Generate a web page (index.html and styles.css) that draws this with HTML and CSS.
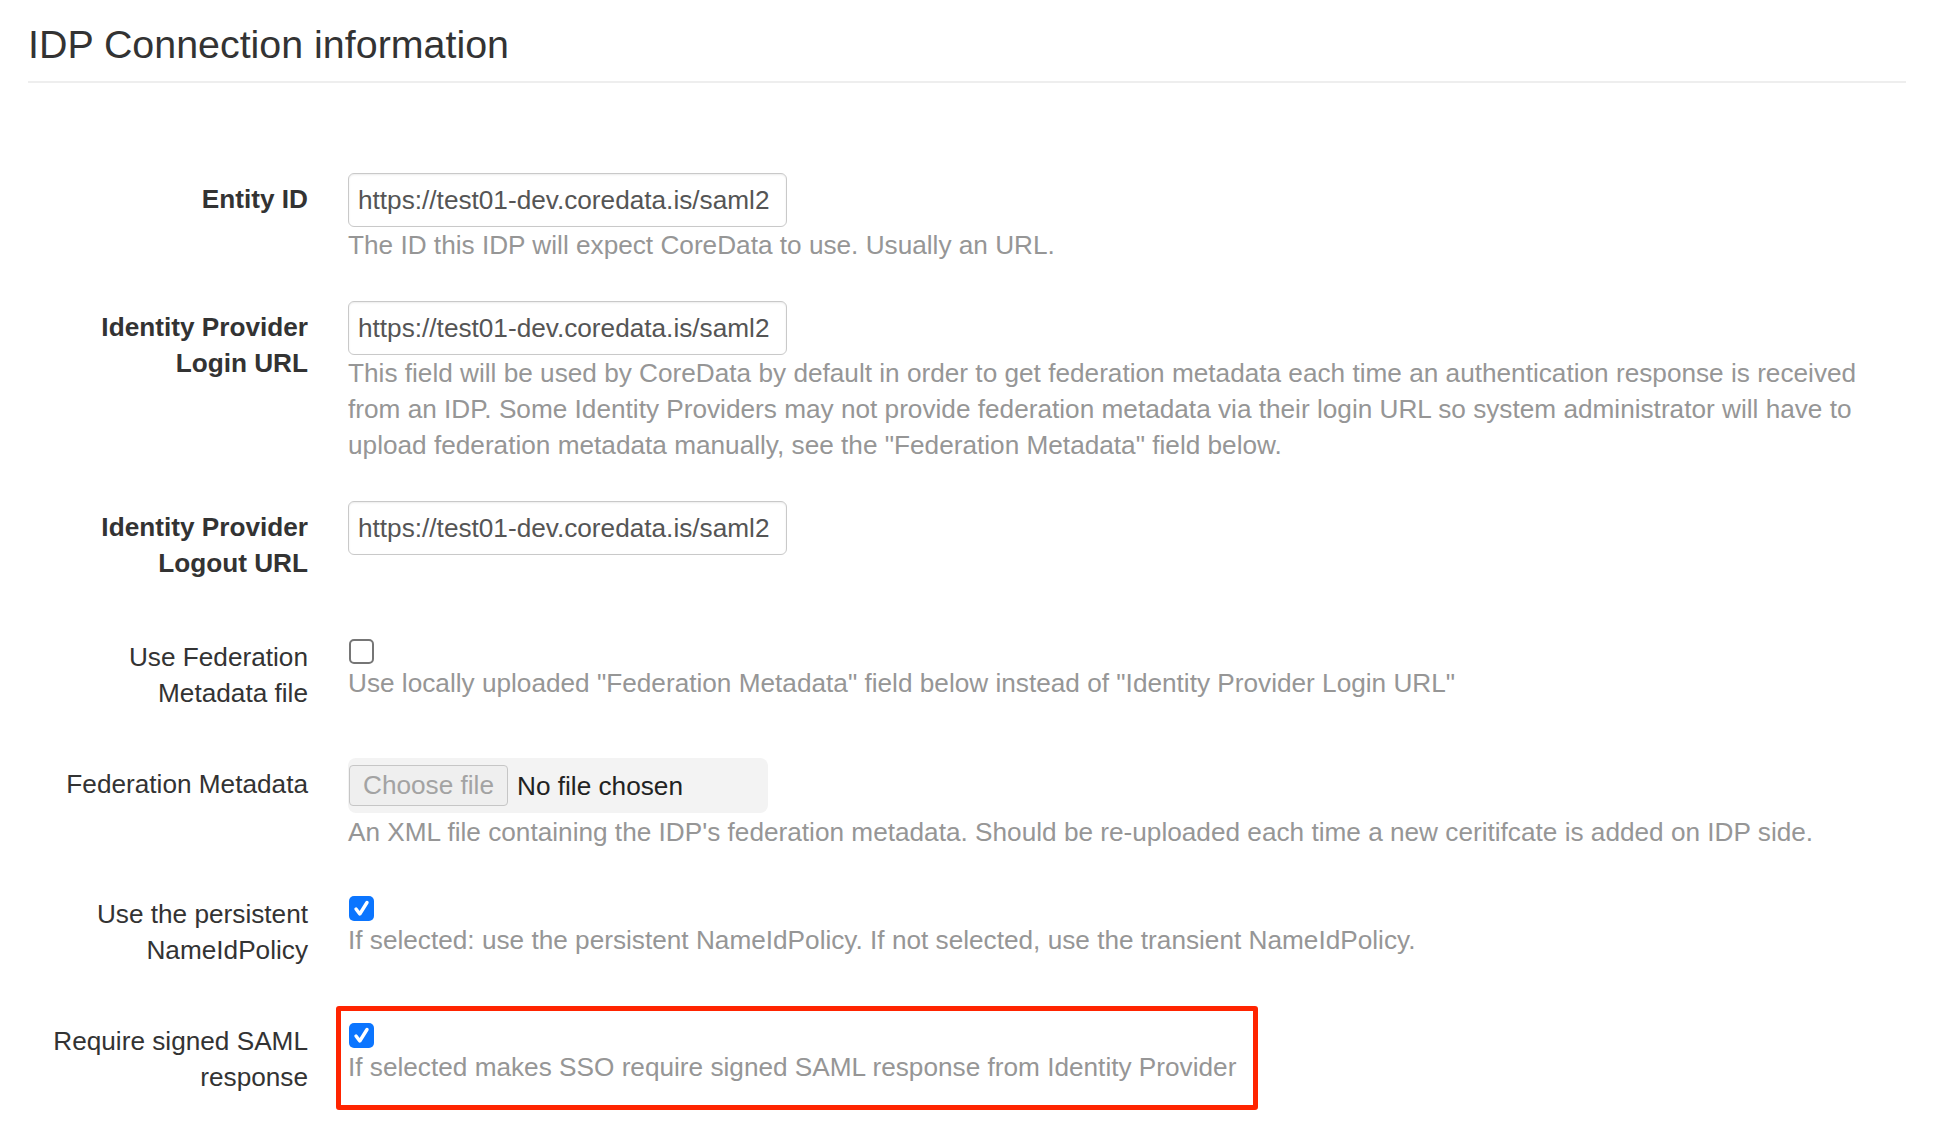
FILE: index.html
```html
<!DOCTYPE html>
<html lang="en">
<head>
<meta charset="utf-8">
<title>IDP Connection information</title>
<link rel="stylesheet" href="styles.css">
</head>
<body>
<div class="page">
  <h3 class="title">IDP Connection information</h3>
  <form class="form">
    <div class="row">
      <label class="lbl strong">Entity ID</label>
      <div class="ctl">
        <input class="txt" type="text" value="https://test01-dev.coredata.is/saml2">
        <p class="help">The ID this IDP will expect CoreData to use. Usually an URL.</p>
      </div>
    </div>
    <div class="row">
      <label class="lbl strong">Identity Provider Login URL</label>
      <div class="ctl">
        <input class="txt" type="text" value="https://test01-dev.coredata.is/saml2">
        <p class="help">This field will be used by CoreData by default in order to get federation metadata each time an authentication response is received from an IDP. Some Identity Providers may not provide federation metadata via their login URL so system administrator will have to upload federation metadata manually, see the "Federation Metadata" field below.</p>
      </div>
    </div>
    <div class="row row-wide">
      <label class="lbl strong">Identity Provider Logout URL</label>
      <div class="ctl">
        <input class="txt" type="text" value="https://test01-dev.coredata.is/saml2">
      </div>
    </div>
    <div class="row">
      <label class="lbl">Use Federation Metadata file</label>
      <div class="ctl check">
        <span class="box"></span>
        <p class="help">Use locally uploaded "Federation Metadata" field below instead of "Identity Provider Login URL"</p>
      </div>
    </div>
    <div class="row">
      <label class="lbl">Federation Metadata</label>
      <div class="ctl">
        <div class="file">
          <span class="file-btn">Choose file</span>
          <span class="file-name">No file chosen</span>
        </div>
        <p class="help">An XML file containing the IDP's federation metadata. Should be re-uploaded each time a new ceritifcate is added on IDP side.</p>
      </div>
    </div>
    <div class="row">
      <label class="lbl">Use the persistent NameIdPolicy</label>
      <div class="ctl check">
        <span class="box on"><svg viewBox="0 0 25 25" width="25" height="25"><path d="M7 13 L10.8 18 L18 6.5" fill="none" stroke="#fff" stroke-width="3.4" stroke-linecap="round" stroke-linejoin="round"/></svg></span>
        <p class="help">If selected: use the persistent NameIdPolicy. If not selected, use the transient NameIdPolicy.</p>
      </div>
    </div>
    <div class="row">
      <label class="lbl">Require signed SAML response</label>
      <div class="ctl check">
        <span class="box on"><svg viewBox="0 0 25 25" width="25" height="25"><path d="M7 13 L10.8 18 L18 6.5" fill="none" stroke="#fff" stroke-width="3.4" stroke-linecap="round" stroke-linejoin="round"/></svg></span>
        <p class="help">If selected makes SSO require signed SAML response from Identity Provider</p>
        <span class="highlight"></span>
      </div>
    </div>
  </form>
</div>
</body>
</html>
```
FILE: styles.css
```css
html, body {
  margin: 0;
  padding: 0;
  background: #fff;
}
body {
  font-family: "Liberation Sans", Arial, Helvetica, sans-serif;
  font-size: 26.2px;
  line-height: 36px;
  color: #333;
}
.page {
  padding: 23px 48px 0 28px;
}
.title {
  margin: 0;
  font-size: 39.4px;
  font-weight: 400;
  line-height: 43px;
  color: #333;
  padding-bottom: 15px;
  border-bottom: 2px solid #eee;
}
.form {
  margin-top: 90px;
}
.row {
  display: flex;
  align-items: flex-start;
  margin-bottom: 38px;
}
.row-wide {
  margin-bottom: 41px;
}
.lbl {
  flex: 0 0 320px;
  box-sizing: border-box;
  padding: 8px 40px 9px 12px;
  text-align: right;
  color: #333;
}
.lbl.strong {
  font-weight: 700;
}
.ctl {
  flex: 1 1 auto;
  min-width: 0;
  padding-right: 24px;
  position: relative;
}
.txt {
  display: block;
  box-sizing: border-box;
  width: 439px;
  height: 54px;
  margin: 0;
  padding: 0 8px 0 9px;
  font-family: inherit;
  font-size: 26.2px;
  color: #555;
  background: #fff;
  border: 1.5px solid #c9c9c9;
  border-radius: 6px;
  box-shadow: inset 0 1px 2px rgba(0, 0, 0, 0.08);
  outline: none;
}
.help {
  margin: 0;
  color: #969696;
}
.check {
  padding-top: 8px;
}
.check .help {
  margin-top: 1px;
}
.box {
  display: block;
  box-sizing: border-box;
  width: 25px;
  height: 25px;
  margin-left: 1px;
  border: 2px solid #767676;
  border-radius: 5px;
  background: #fff;
}
.box.on {
  border: none;
  background: #0b75ff;
}
.box svg {
  display: block;
}
.file {
  display: flex;
  align-items: center;
  box-sizing: border-box;
  width: 420px;
  height: 55px;
  padding-left: 1px;
  background: #f3f3f3;
  border-radius: 8px;
}
.file-btn {
  box-sizing: border-box;
  width: 159px;
  height: 41px;
  line-height: 38px;
  text-align: center;
  color: #a3a3a3;
  background: #efefef;
  border: 1.5px solid #c6c6c6;
  border-radius: 4px;
}
.file-name {
  margin-left: 9px;
  color: #222;
}
.file + .help {
  margin-top: 1px;
}
.highlight {
  position: absolute;
  left: -12px;
  top: -9px;
  width: 922px;
  height: 104px;
  box-sizing: border-box;
  border: 5px solid #ff2400;
  border-radius: 3px;
  pointer-events: none;
}
```
